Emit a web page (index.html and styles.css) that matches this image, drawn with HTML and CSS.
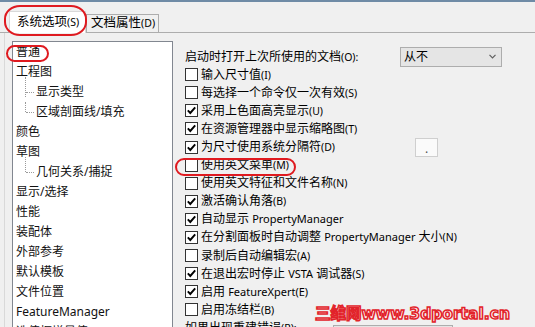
FILE: index.html
```html
<!DOCTYPE html>
<html lang="zh-CN">
<head>
  <meta charset="UTF-8" />
  <title>系统选项 - 普通</title>
  <link rel="stylesheet" href="styles.css">
</head>
<body>

  <div class="window">

    <div class="tabs">
      <div class="tab active">系统选项<span class="key">(S)</span></div>
      <div class="tab">文档属性<span class="key">(D)</span></div>
    </div>

    <div class="page">

      <ul class="tree">
        <li>普通</li>
        <li>工程图</li>
        <li class="child first">显示类型</li>
        <li class="child last">区域剖面线/填充</li>
        <li>颜色</li>
        <li>草图</li>
        <li class="child first last">几何关系/捕捉</li>
        <li>显示/选择</li>
        <li>性能</li>
        <li>装配体</li>
        <li>外部参考</li>
        <li>默认模板</li>
        <li>文件位置</li>
        <li>FeatureManager</li>
        <li>选值框增量值</li>
      </ul>

      <div class="options">
        <div class="row">
          <span class="text open-label">启动时打开上次所使用的文档<span class="key">(O):</span></span>
          <div class="combo">
            <span>从不</span>
            <svg width="7" height="5" viewBox="0 0 7 5"><path d="M0.5 0.8 L3.5 3.8 L6.5 0.8" fill="none" stroke="#606060" stroke-width="1.2"/></svg>
          </div>
        </div>
        <div class="row"><span class="cb"></span><span class="text">输入尺寸值<span class="key">(I)</span></span></div>
        <div class="row"><span class="cb"></span><span class="text">每选择一个命令仅一次有效<span class="key">(S)</span></span></div>
        <div class="row"><span class="cb on"><svg width="11" height="11" viewBox="0 0 11 11"><path d="M1.8 5.4 L4.3 8 L9.2 2.4" fill="none" stroke="#000" stroke-width="1.9"/></svg></span><span class="text">采用上色面高亮显示<span class="key">(U)</span></span></div>
        <div class="row"><span class="cb on"><svg width="11" height="11" viewBox="0 0 11 11"><path d="M1.8 5.4 L4.3 8 L9.2 2.4" fill="none" stroke="#000" stroke-width="1.9"/></svg></span><span class="text">在资源管理器中显示缩略图<span class="key">(T)</span></span></div>
        <div class="row">
          <span class="cb on"><svg width="11" height="11" viewBox="0 0 11 11"><path d="M1.8 5.4 L4.3 8 L9.2 2.4" fill="none" stroke="#000" stroke-width="1.9"/></svg></span>
          <span class="text sep-label">为尺寸使用系统分隔符<span class="key">(D)</span></span>
          <span class="field">.</span>
        </div>
        <div class="row"><span class="cb"></span><span class="text">使用英文菜单<span class="key">(M)</span></span></div>
        <div class="row"><span class="cb"></span><span class="text">使用英文特征和文件名称<span class="key">(N)</span></span></div>
        <div class="row"><span class="cb on"><svg width="11" height="11" viewBox="0 0 11 11"><path d="M1.8 5.4 L4.3 8 L9.2 2.4" fill="none" stroke="#000" stroke-width="1.9"/></svg></span><span class="text">激活确认角落<span class="key">(B)</span></span></div>
        <div class="row"><span class="cb on"><svg width="11" height="11" viewBox="0 0 11 11"><path d="M1.8 5.4 L4.3 8 L9.2 2.4" fill="none" stroke="#000" stroke-width="1.9"/></svg></span><span class="text">自动显示 <span class="en">PropertyManager</span></span></div>
        <div class="row"><span class="cb on"><svg width="11" height="11" viewBox="0 0 11 11"><path d="M1.8 5.4 L4.3 8 L9.2 2.4" fill="none" stroke="#000" stroke-width="1.9"/></svg></span><span class="text">在分割面板时自动调整 <span class="en">PropertyManager</span> 大小<span class="key">(N)</span></span></div>
        <div class="row"><span class="cb"></span><span class="text">录制后自动编辑宏<span class="key">(A)</span></span></div>
        <div class="row"><span class="cb on"><svg width="11" height="11" viewBox="0 0 11 11"><path d="M1.8 5.4 L4.3 8 L9.2 2.4" fill="none" stroke="#000" stroke-width="1.9"/></svg></span><span class="text">在退出宏时停止 <span class="en">VSTA</span> 调试器<span class="key">(S)</span></span></div>
        <div class="row"><span class="cb on"><svg width="11" height="11" viewBox="0 0 11 11"><path d="M1.8 5.4 L4.3 8 L9.2 2.4" fill="none" stroke="#000" stroke-width="1.9"/></svg></span><span class="text">启用 <span class="en">FeatureXpert(E)</span></span></div>
        <div class="row"><span class="cb"></span><span class="text">启用冻结栏<span class="key">(B)</span></span></div>
        <div class="row last-row">
          <span class="text error-label">如果出现重建错误<span class="key">(R):</span></span>
          <div class="combo wide"><span>提示</span></div>
        </div>
      </div>

    </div>

    <!-- red marks drawn over the dialog -->
    <div class="mark mark-tab"></div>
    <div class="mark mark-general"></div>
    <div class="mark mark-menu"></div>

    <div class="watermark">三维网www.3dportal.cn</div>

  </div>

</body>
</html>
```

FILE: styles.css
```css
* {
  box-sizing: border-box;
}

body {
  margin: 0;
  background: #f0f0f0;
  font-family: "Noto Sans", "Noto Sans CJK SC", sans-serif;
  font-size: 12px;
  color: #000;
  overflow: hidden;
}

.window {
  position: relative;
  width: 535px;
  height: 327px;
  border-top: 2px solid #6f8ba6;
  overflow: hidden;
}

/* tabs */
.tabs {
  display: flex;
  align-items: flex-end;
  height: 31px;
  padding-left: 9px;
  border-bottom: 1px solid #adadad;
}

.tab {
  height: 18px;
  padding: 0 3px 0 4px;
  border: 1px solid #adadad;
  border-bottom: none;
  background: #f0f0f0;
  font-size: 12.5px;
  line-height: 16px;
  white-space: nowrap;
}

.tab.active {
  height: 22px;
  margin-bottom: -1px;
  padding: 0 6px 0 7px;
  background: #fff;
  border-color: #d9d9d9;
  line-height: 20px;
}

.key {
  font-size: 10.5px;
}

.en {
  font-size: 11px;
}

/* page */
.page {
  display: flex;
  margin-left: 4px;
  padding: 8px 0 0 7px;
  border-left: 1px solid #d9d9d9;
  height: 300px;
}

.tree {
  flex-shrink: 0;
  width: 161px;
  height: 300px;
  margin: 0;
  padding: 0;
  list-style: none;
  background: #fff;
  border: 1px solid #828790;
}

.tree li {
  position: relative;
  height: 20px;
  line-height: 20px;
  padding-left: 3px;
  white-space: nowrap;
  color: #111;
}

.tree li.child {
  padding-left: 23px;
}

.tree li.child::before {
  content: "";
  position: absolute;
  left: 12px;
  top: 0;
  height: 100%;
  border-left: 1px dotted #9a9a9a;
}

.tree li.child.first::before {
  top: -5px;
}

.tree li.child.last::before {
  height: 50%;
}

.tree li.child.first.last::before {
  height: 15px;
}

.tree li.child::after {
  content: "";
  position: absolute;
  left: 13px;
  top: 10px;
  width: 8px;
  border-top: 1px dotted #9a9a9a;
}

/* options column */
.options {
  flex: 1;
  padding: 6.5px 0 0 12px;
}

.row {
  display: flex;
  align-items: center;
  height: 18.1px;
  line-height: 18px;
  white-space: nowrap;
}

.cb {
  flex-shrink: 0;
  display: flex;
  align-items: center;
  justify-content: center;
  width: 13px;
  height: 13px;
  margin-right: 3px;
  border: 1px solid #333;
  background: #fff;
}

.open-label {
  width: 215px;
}

.sep-label {
  width: 214px;
}

.error-label {
  width: 148px;
}

.combo {
  display: flex;
  align-items: center;
  justify-content: space-between;
  width: 102px;
  height: 20px;
  padding: 0 5px 0 3px;
  border: 1px solid #adadad;
  background: #e5e5e5;
  line-height: 16px;
}

.combo.wide {
  width: 120px;
}

.field {
  width: 23px;
  height: 19px;
  border: 1px solid #cfcfcf;
  background: #fafafa;
  text-align: center;
  line-height: 19px;
  color: #555;
}

.last-row {
  align-items: flex-start;
}

.last-row .combo {
  margin-top: 6px;
}

/* red annotation marks */
.mark {
  position: absolute;
  border: 2px solid #df1a20;
}

.mark-tab {
  left: 4px;
  top: 3px;
  width: 83px;
  height: 31px;
  border-radius: 16px / 14px;
}

.mark-general {
  left: 6px;
  top: 43px;
  width: 43px;
  height: 17px;
  border-radius: 9px;
}

.mark-menu {
  left: 175px;
  top: 156px;
  width: 121px;
  height: 18px;
  border-radius: 10px;
}

.watermark {
  position: absolute;
  left: 315px;
  top: 302px;
  font-family: "DejaVu Sans", "Noto Sans CJK SC", sans-serif;
  font-size: 15.5px;
  font-weight: bold;
  line-height: 20px;
  color: #fff4f4;
  -webkit-text-stroke: 1.5px #e2232a;
  white-space: nowrap;
}
```
